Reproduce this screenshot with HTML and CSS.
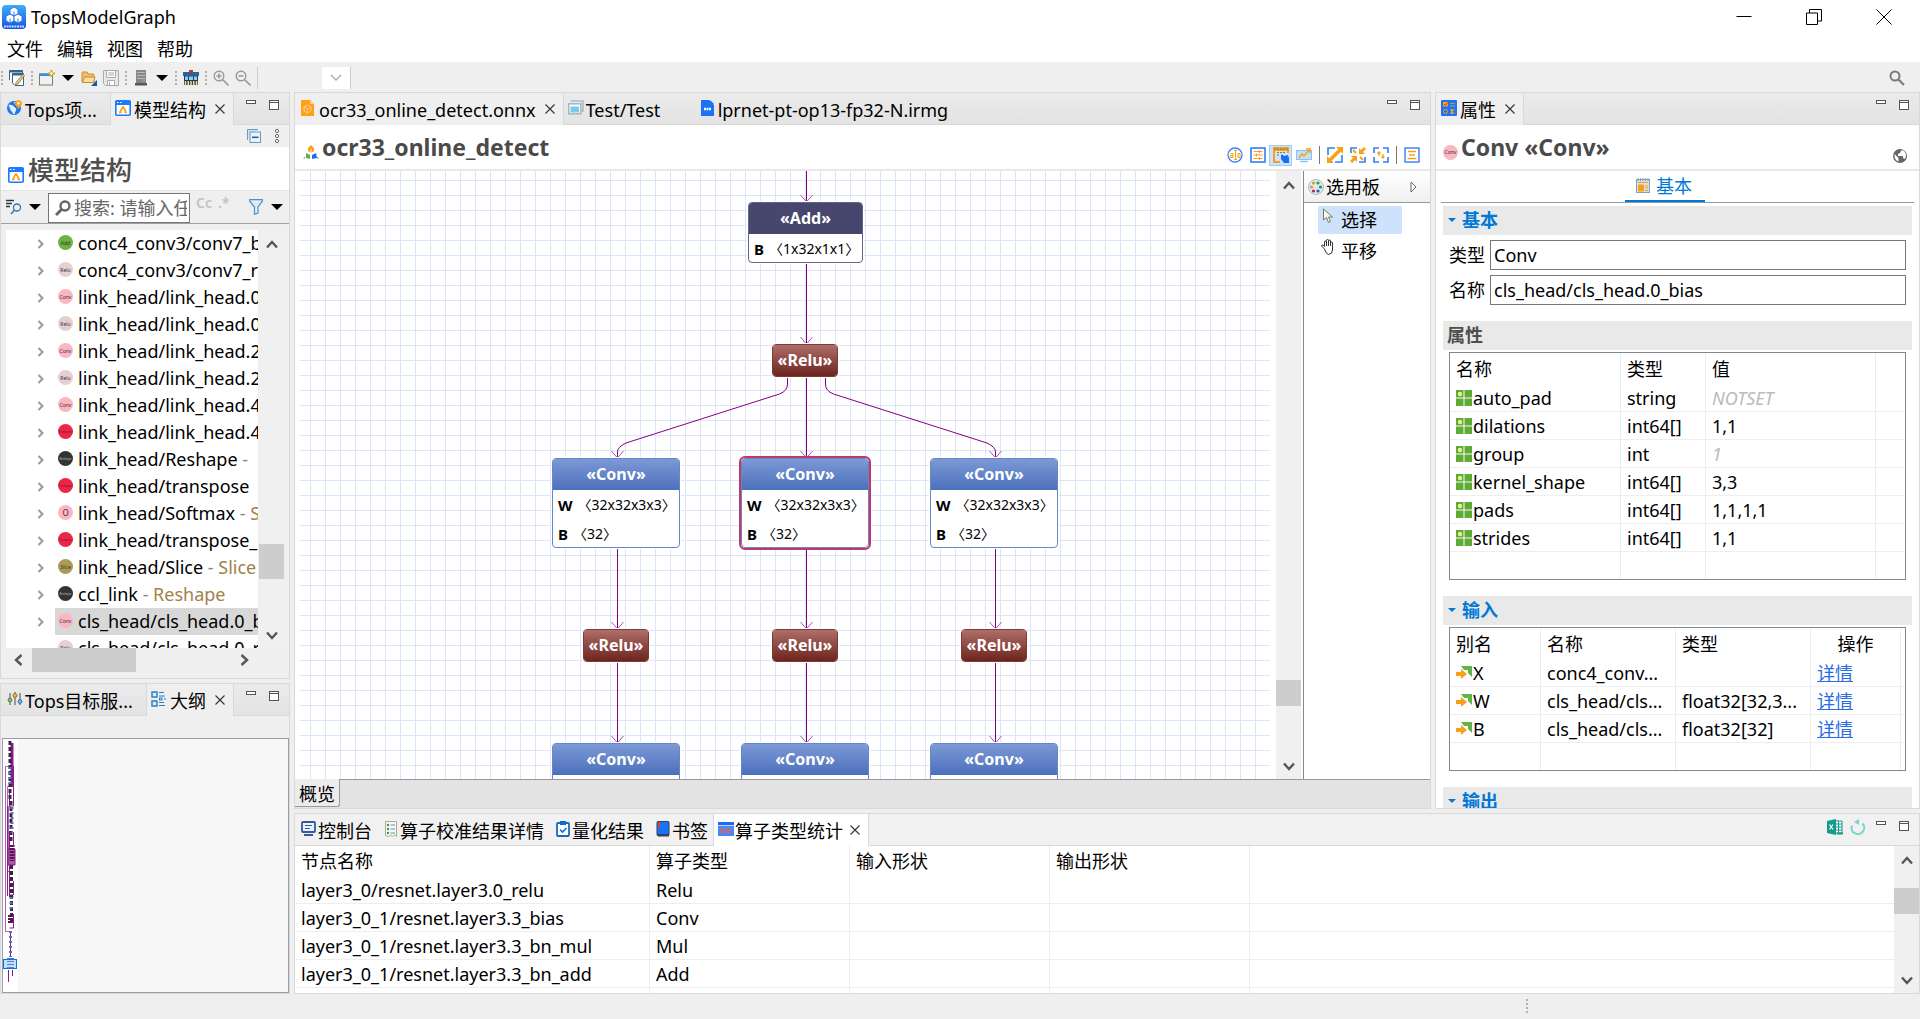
FILE: index.html
```html
<!DOCTYPE html>
<html lang="zh-CN">
<head>
<meta charset="utf-8">
<title>TopsModelGraph</title>
<link rel="stylesheet" href="styles.css">
</head>
<body>
<svg class="defs" aria-hidden="true">
  <defs>
    <linearGradient id="g-app" x1="0" y1="0" x2="0" y2="1"><stop offset="0" stop-color="#37b0fb"/><stop offset="1" stop-color="#1f50dc"/></linearGradient>
    <symbol id="close" viewBox="0 0 12 12"><path d="M1.500 1.500l9 9M10.500 1.500l-9 9" stroke="#333" stroke-width="1.100" fill="none"/></symbol>
    <symbol id="min" viewBox="0 0 16 16"><rect x="3.500" y="2.500" width="9" height="3" fill="#fff" stroke="#555"/></symbol>
    <symbol id="max" viewBox="0 0 16 16"><rect x="3.500" y="2.500" width="9" height="9" fill="#fff" stroke="#555"/><path d="M3 4.500h10" stroke="#555"/></symbol>
    <symbol id="caret" viewBox="0 0 12 8"><path d="M0 1h12L6 7z" fill="#000"/></symbol>
    <symbol id="twig" viewBox="0 0 8 10"><path d="M1.500 1l4 4-4 4" fill="none" stroke="#999" stroke-width="2"/></symbol>
    <symbol id="up" viewBox="0 0 12 12"><path d="M1 9.500l5-5.500 5 5.500" fill="none" stroke="#555" stroke-width="2.400"/></symbol>
    <symbol id="down" viewBox="0 0 12 12"><path d="M1 2.500L6 8l5-5.500" fill="none" stroke="#555" stroke-width="2.400"/></symbol>
    <symbol id="left" viewBox="0 0 12 12"><path d="M9.500 1L4 6l5.500 5" fill="none" stroke="#555" stroke-width="2.400"/></symbol>
    <symbol id="right" viewBox="0 0 12 12"><path d="M2.500 1L8 6l-5.500 5" fill="none" stroke="#555" stroke-width="2.400"/></symbol>
    <symbol id="attr" viewBox="0 0 16 16"><path d="M0 0h7.500v7.500H0zM8.500 0H16v7.500H8.500zM0 8.500h7.500V16H0zM8.500 8.500H16V16H8.500z" fill="#5fab35"/><circle cx="4" cy="4" r="2.200" fill="#eef08c"/></symbol>
    <symbol id="input" viewBox="0 0 16 16"><path d="M5 1h11v11l-4-4V5H8z" fill="#63b446"/><path d="M0 7h5V4l6 5-6 5v-3H0z" fill="#f7a11b"/></symbol>
    <symbol id="model" viewBox="0 0 16 16"><rect x=".8" y=".8" width="14.400" height="14.400" rx="1" fill="#fff" stroke="#1a7bff" stroke-width="1.600"/><path d="M0 1h16v4H0z" fill="#1a7bff"/><path d="M2 2.500h1.500M5 2.500h1.500" stroke="#fff"/><path d="M8 6.500L5 12M8 6.500l3 5.500M4 12.500h2.500M9.500 12.500H12" stroke="#f7a11b" stroke-width="1.600" fill="none"/></symbol>
  </defs>
</svg>

<div class="app">
  <header class="titlebar">
    <svg class="logo" viewBox="0 0 24 24"><rect width="24" height="24" rx="4" fill="url(#g-app)"/><g fill="#fff" stroke="#2a7cec" stroke-width="1"><path d="M12 2l4 2.200v4.600L12 11 8 8.800V4.200z"/><path d="M8 9l4 2.200v4.600L8 18l-4-2.200v-4.600z"/><path d="M16 9l4 2.200v4.600L16 18l-4-2.200v-4.600z"/></g><path d="M12 6.500v4M8 13.500V18M16 13.500V18" stroke="#2a7cec"/><path d="M2 21.500h20" stroke="#b9e4ff" stroke-width="2" stroke-dasharray="2 .6"/></svg>
    <span>TopsModelGraph</span>
    <div class="win-buttons">
      <button aria-label="最小化"><svg viewBox="0 0 16 16"><path d="M.5 7.500h15" stroke="#000"/></svg></button>
      <button aria-label="还原"><svg viewBox="0 0 16 16"><path d="M.5 4h11v11.500H.5zM3.500 4V.5h12v11.500h-4" fill="none" stroke="#000"/></svg></button>
      <button aria-label="关闭"><svg viewBox="0 0 16 16"><path d="M.5.5l15 15M15.500.5l-15 15" stroke="#000" fill="none"/></svg></button>
    </div>
  </header>

  <nav class="menubar"><button>文件</button><button>编辑</button><button>视图</button><button>帮助</button></nav>

  <div class="toolbar">
    <i class="grip"></i>
    <button aria-label="编辑窗口"><svg viewBox="0 0 16 16"><path d="M.5 10V.5h13V4" fill="#fff" stroke="#35648f"/><path d="M3.500 13V3.500h11v12H6z" fill="#fff" stroke="#35648f"/><path d="M0 1h14v1.500H0zM3 4h12v1.500H3z" fill="#35648f"/><path d="M7 12.500L14 4l1.500 1.500L9 14l-2.500.5z" fill="#eac57a" stroke="#7c6a3d" stroke-width=".7"/></svg></button>
    <i class="grip"></i>
    <button aria-label="新建"><svg viewBox="0 0 16 16"><rect x=".5" y="4" width="13" height="11" fill="#eaf4fd" stroke="#927a3f"/><path d="M0 3.500h11v2.500H0z" fill="#3f8fd2"/><path d="M12.500 0v7M9 3.500h7" stroke="#d6a536" stroke-width="2"/><path d="M12.500 2v3M11 3.500h3" stroke="#fff3b0"/></svg></button>
    <button aria-label="新建菜单" class="drop"><svg viewBox="0 0 12 8"><use href="#caret"/></svg></button>
    <button aria-label="打开"><svg viewBox="0 0 16 16"><path d="M1 12V3q0-1 1-1h4l1 2h5q1 0 1 1v7z" fill="#f2bd68" stroke="#c98a33"/><path d="M1.500 12.500L3.500 7H14l-1.500 5.500z" fill="#ffdc9c" stroke="#c98a33"/><path d="M16 10v6h-6z" fill="#0f58a8"/></svg></button>
    <button aria-label="保存"><svg viewBox="0 0 16 16"><path d="M.5.5h15v15H2.500l-2-2z" fill="#e8e8e8" stroke="#aaa"/><path d="M3.500.5h9v7h-9zM4.500 10.500h7v5h-7z" fill="#fff" stroke="#aaa"/><path d="M5 3h6M5 5h6M6.500 12v3" stroke="#aaa"/></svg></button>
    <i class="grip"></i>
    <button aria-label="设备"><svg viewBox="0 0 16 16"><path d="M3 0h10v13H3z" fill="#888"/><path d="M4 2.500h8M4 5.500h8M4 8.500h8" stroke="#bbb"/><path d="M2 13h12v2.500H2z" fill="#555"/><path d="M10 10.500h2" stroke="#4fd552" stroke-width="1.500"/></svg></button>
    <button aria-label="设备菜单" class="drop"><svg viewBox="0 0 12 8"><use href="#caret"/></svg></button>
    <i class="grip"></i>
    <button aria-label="模型库"><svg viewBox="0 0 16 16"><path d="M1 6h14v9H1z" fill="#24384f"/><path d="M0 2h16v4H0z" fill="#28639c"/><path d="M6 0h4v3H6z" fill="#c3303a"/><path d="M2 6.500h12v3.500H2z" fill="#8fd1f5"/><path d="M5.500 6.500V10M10.500 6.500V10" stroke="#24384f"/><path d="M2.500 11v5M5.300 11v5M8 11v5M10.700 11v5M13.500 11v5" stroke="#ffe0a0" stroke-width="1.500"/></svg></button>
    <i class="grip"></i>
    <button aria-label="放大"><svg viewBox="0 0 16 16"><circle cx="6" cy="6" r="4.800" fill="none" stroke="#999" stroke-width="1.400"/><path d="M3.500 6h5M6 3.500v5M9.500 9.500l6 6" stroke="#999" stroke-width="1.600"/></svg></button>
    <button aria-label="缩小"><svg viewBox="0 0 16 16"><circle cx="6" cy="6" r="4.800" fill="none" stroke="#999" stroke-width="1.400"/><path d="M3.500 6h5M9.500 9.500l6 6" stroke="#999" stroke-width="1.600"/></svg></button>
    <i class="rule"></i>
    <button class="zoom-combo" aria-label="缩放比例"><svg viewBox="0 0 12 8"><path d="M1 1l5 5 5-5" fill="none" stroke="#aaa" stroke-width="1.300"/></svg></button>
    <i class="rule"></i>
    <button class="search-all" aria-label="搜索"><svg viewBox="0 0 16 16"><circle cx="6" cy="6" r="4.500" fill="none" stroke="#7a7a7a" stroke-width="2"/><path d="M9.500 9.500l5.500 5.500" stroke="#7a7a7a" stroke-width="2.200"/></svg></button>
  </div>

  <div class="workspace">
    <div class="side">
      <section class="panel model-panel">
        <div class="tabs">
          <button class="tab t-proj"><svg class="ic" viewBox="0 0 16 16"><circle cx="7" cy="8" r="7" fill="#1f74f0"/><path d="M2 5l4 1 3 3-2 5-3-4zM7 2l3 4" fill="#dff0ff" stroke="#dff0ff"/><path d="M11.500 9L8.500 5a3.400 3.400 0 1 1 6 0z" fill="#f7a11b"/><circle cx="11.500" cy="3.300" r="1.200" fill="#fff"/></svg>Tops项...</button>
          <div class="tab active"><svg class="ic" viewBox="0 0 16 16"><use href="#model"/></svg>模型结构<button class="x" aria-label="关闭"><svg viewBox="0 0 12 12"><use href="#close"/></svg></button></div>
          <div class="view-buttons"><button aria-label="最小化"><svg class="ic" viewBox="0 0 16 16"><use href="#min"/></svg></button><button aria-label="最大化"><svg class="ic" viewBox="0 0 16 16"><use href="#max"/></svg></button></div>
        </div>
        <div class="view-tools">
          <button aria-label="全部折叠"><svg viewBox="0 0 14 14"><path d="M.5 11V.5H11" fill="#cfe3f5" stroke="#6f97bd"/><rect x="3" y="3" width="10.500" height="10.500" fill="#e6f2fc" stroke="#6f97bd"/><path d="M5 8.300h6.500" stroke="#1d5c96" stroke-width="1.500"/></svg></button>
          <button aria-label="视图菜单"><svg viewBox="0 0 14 14"><g fill="#fff" stroke="#666"><circle cx="7" cy="2" r="1.600"/><circle cx="7" cy="7" r="1.600"/><circle cx="7" cy="12" r="1.600"/></g></svg></button>
        </div>
        <h2 class="model-title"><svg class="ic" viewBox="0 0 16 16"><use href="#model"/></svg>模型结构</h2>
        <div class="filter">
          <button aria-label="搜索方式"><svg viewBox="0 0 16 16"><path d="M0 1.500h8M0 4.500h6M0 7.500h4" stroke="#333" stroke-width="1.500"/><circle cx="11" cy="8.500" r="3.500" fill="none" stroke="#2e76b5" stroke-width="1.300"/><path d="M8.500 11L5 15" stroke="#2e76b5" stroke-width="1.500"/></svg></button>
          <button class="drop" aria-label="搜索选项"><svg viewBox="0 0 12 8"><use href="#caret"/></svg></button>
          <label class="search"><svg viewBox="0 0 16 16"><circle cx="10" cy="6" r="4.500" fill="none" stroke="#666" stroke-width="2.400"/><path d="M6.500 9.500L1 15" stroke="#666" stroke-width="3"/></svg><input type="text" placeholder="搜索: 请输入任意文本" aria-label="搜索"></label>
          <button class="opt">Cc</button><button class="opt">.*</button>
          <button class="funnel" aria-label="过滤"><svg viewBox="0 0 14 16"><path d="M.7.7h12.600v1.500L9 8v6l-3.500 1.300V8L.7 2.200z" fill="#dcedfa" stroke="#5b8db8" stroke-width="1.200"/></svg></button>
          <button class="drop" aria-label="过滤选项"><svg viewBox="0 0 12 8"><use href="#caret"/></svg></button>
        </div>
        <div class="tree-wrap">
          <ul class="tree">
            <li><svg class="tw"><use href="#twig"/></svg><span class="op add">Add</span><span class="lb">conc4_conv3/conv7_bn_add</span></li>
            <li><svg class="tw"><use href="#twig"/></svg><span class="op relu">Relu</span><span class="lb">conc4_conv3/conv7_relu</span></li>
            <li><svg class="tw"><use href="#twig"/></svg><span class="op conv">Conv</span><span class="lb">link_head/link_head.0_bias</span></li>
            <li><svg class="tw"><use href="#twig"/></svg><span class="op relu">Relu</span><span class="lb">link_head/link_head.0_relu</span></li>
            <li><svg class="tw"><use href="#twig"/></svg><span class="op conv">Conv</span><span class="lb">link_head/link_head.2_bias</span></li>
            <li><svg class="tw"><use href="#twig"/></svg><span class="op relu">Relu</span><span class="lb">link_head/link_head.2_relu</span></li>
            <li><svg class="tw"><use href="#twig"/></svg><span class="op conv">Conv</span><span class="lb">link_head/link_head.4_bias</span></li>
            <li><svg class="tw"><use href="#twig"/></svg><span class="op trans">Transpose</span><span class="lb">link_head/link_head.4_trans</span></li>
            <li><svg class="tw"><use href="#twig"/></svg><span class="op reshape">Reshape</span><span class="lb">link_head/Reshape<em class="d"> -</em></span></li>
            <li><svg class="tw"><use href="#twig"/></svg><span class="op trans">Transpose</span><span class="lb">link_head/transpose</span></li>
            <li><svg class="tw"><use href="#twig"/></svg><span class="op soft">O</span><span class="lb">link_head/Softmax<em class="d"> - </em><em>Softmax</em></span></li>
            <li><svg class="tw"><use href="#twig"/></svg><span class="op trans">Transpose</span><span class="lb">link_head/transpose_1</span></li>
            <li><svg class="tw"><use href="#twig"/></svg><span class="op slice">Slice</span><span class="lb">link_head/Slice<em class="d"> - </em><em>Slice</em></span></li>
            <li><svg class="tw"><use href="#twig"/></svg><span class="op reshape">Reshape</span><span class="lb">ccl_link<em class="d"> - </em><em>Reshape</em></span></li>
            <li class="sel"><svg class="tw"><use href="#twig"/></svg><span class="op conv">Conv</span><span class="lb">cls_head/cls_head.0_bias</span></li>
            <li><svg class="tw"></svg><span class="op relu">Relu</span><span class="lb">cls_head/cls_head.0_relu</span></li>
          </ul>
          <div class="vbar"><svg viewBox="0 0 12 12"><use href="#up"/></svg><i class="thumb tree-v"></i><svg viewBox="0 0 12 12"><use href="#down"/></svg></div>
          <div class="hbar"><svg viewBox="0 0 12 12"><use href="#left"/></svg><i class="thumb"></i><svg viewBox="0 0 12 12"><use href="#right"/></svg></div>
        </div>
      </section>

      <section class="panel outline-panel">
        <div class="tabs">
          <button class="tab t-target"><svg class="ic" viewBox="0 0 16 16"><path d="M3 2v12M8 1v13M13 2v12" stroke="#666" stroke-width="1.200"/><circle cx="3" cy="9" r="1.900" fill="#8fc97a" stroke="#4a7f3a"/><circle cx="8" cy="4.500" r="1.900" fill="#eec04e" stroke="#8a6a1d"/><circle cx="13" cy="10.500" r="1.900" fill="#7fb7e6" stroke="#396e9c"/></svg>Tops目标服...</button>
          <div class="tab active"><svg class="ic" viewBox="0 0 16 16"><path d="M1 1h5v5H1zM1 10h5v5H1z" fill="#d9ecfa" stroke="#2d7cc0" stroke-width="1.400"/><path d="M8 1.500h5M8 5h6M13 8h2M8 11.500h5M8 14.500h6" stroke="#2d7cc0"/><rect x="8.500" y="7" width="2.500" height="2" fill="none" stroke="#2d7cc0"/></svg>大纲<button class="x" aria-label="关闭"><svg viewBox="0 0 12 12"><use href="#close"/></svg></button></div>
          <div class="view-buttons"><button aria-label="最小化"><svg class="ic" viewBox="0 0 16 16"><use href="#min"/></svg></button><button aria-label="最大化"><svg class="ic" viewBox="0 0 16 16"><use href="#max"/></svg></button></div>
        </div>
        <div class="outline">
          <svg viewBox="0 0 15 253">
            <g fill="none" stroke="#8b1a8b" stroke-width="1">
              <path d="M10 4v44" stroke-width="3"/><path d="M8 27.500H3.500v165H8M9 47.500H5.500v85H9M9 67.500H6.500v57H11" stroke="#b35fb8"/>
              <path d="M11.500 27v40M7.500 50v17h4M5.500 67v90M7.500 92v66h4M11.500 142v14h-4M11.500 175v14h-4M11.500 93v14"/><path d="M6 110h7v16H6z" fill="#a95aa9"/>
              <path d="M8.500 192v26M6.500 231v12M10.500 231v6"/>
            </g>
            <path d="M8 2v60M9 62v40M9.500 126v60" stroke="#3b2440" stroke-width="3" stroke-dasharray="4 2"/>
            <path d="M8 28v20M10 68v26M9 158v14M8.500 192v26" stroke="#5673b8" stroke-width="3" stroke-dasharray="2 3"/>
            <path d="M10 106v16M8.500 176v8" stroke="#5a164f" stroke-width="5" stroke-dasharray="2 1"/>
            <path d="M5 219.500h7M5 222.500h7M5 225.500h7M5 228.500h7" stroke="#5673b8"/>
            <rect x="1.500" y="220.500" width="13" height="9" fill="#4aa3ff" fill-opacity=".35" stroke="#0b76d8"/>
          </svg>
        </div>
      </section>
    </div>

    <div class="main">
      <div class="upper">
        <section class="panel editor">
          <div class="tabs">
            <div class="tab active"><svg class="ic" viewBox="0 0 16 16"><path d="M1 0h9l4 4v12H1z" fill="#ff9f1a"/><path d="M10 0v4h4z" fill="#ffd390"/><path d="M7.500 5l3.500 2v4l-3.500 2L4 11V7zM4 7l3.500 2L11 7M7.500 9v4" fill="none" stroke="#ffd390" stroke-width=".9"/></svg>ocr33_online_detect.onnx<button class="x" aria-label="关闭"><svg viewBox="0 0 12 12"><use href="#close"/></svg></button></div>
            <button class="tab t-test"><svg class="ic" viewBox="0 0 16 16"><path d="M3 1h12v10h-2" fill="none" stroke="#a9bccb" stroke-width="1.600"/><rect x=".8" y="3.800" width="12" height="10" fill="#fff" stroke="#a9b6c4" stroke-width="1.600"/><rect x="2.500" y="6.500" width="8.500" height="6" fill="#79c9e8"/></svg>Test/Test</button>
            <button class="tab"><svg class="ic" viewBox="0 0 16 16"><path d="M1 0h8l5 5v11H1z" fill="#1a73f5"/><path d="M10 0v4h4z" fill="#1a73f5"/><path d="M4 9h2M6.500 9h2M9 9h2" stroke="#fff" stroke-width="2.500"/></svg>lprnet-pt-op13-fp32-N.irmg</button>
            <div class="view-buttons"><button aria-label="最小化"><svg class="ic" viewBox="0 0 16 16"><use href="#min"/></svg></button><button aria-label="最大化"><svg class="ic" viewBox="0 0 16 16"><use href="#max"/></svg></button></div>
          </div>
          <header class="form-head">
            <h1><svg class="ic" viewBox="0 0 16 16"><path d="M8 1l3 3v3L8 9 5 7V4z" fill="#f7a11b"/><path d="M8 5v4" stroke="#fff"/><path d="M3 9l4 2v4l-4-1z" fill="#5fb04a"/><path d="M9 11l4-2 1 5-5 1z" fill="#1a6df5"/><path d="M0 14.500l2-2v2zM16 14.500l-2-2v2z" fill="#5fb04a"/></svg>ocr33_online_detect</h1>
            <div class="graph-tools">
              <button aria-label="属性显示"><svg class="ic" viewBox="0 0 16 16"><circle cx="8" cy="8" r="7" fill="#fff" stroke="#3288f7" stroke-width="1.300"/><path d="M8.500 3.500v9M7 3.500h3M7 12.500h3M3.500 6.500h2.500v4H3.500v-2H6M11 6.500h2v4h-2z" fill="none" stroke="#f7a11b"/></svg></button>
              <button aria-label="布局"><svg class="ic" viewBox="0 0 16 16"><rect x="1" y="1" width="14" height="14" fill="#fff" stroke="#2f80f7" stroke-width="1.600"/><path d="M3.500 4.500h9M3.500 8h9M3.500 11.500h9" stroke="#f7a11b"/><path d="M9.500 3v3M6.500 6.500v3M9.500 10v3" stroke="#f7a11b"/></svg></button>
              <button class="on" aria-label="手动选择"><svg class="ic" viewBox="0 0 16 16"><path d="M0 0h16v4H0z" fill="#f7a11b"/><path d="M1 0v15h6M15 1v5" fill="none" stroke="#f7a11b" stroke-width="2"/><path d="M1 2h14M4 5.500h8M4 8h3" stroke="#8a7c3c" stroke-dasharray="2 1"/><path d="M8 8q1-1 2 0l1 1 4-1 1 3v5h-5l-3-4z" fill="#1a6df5"/></svg></button>
              <button aria-label="监视"><svg class="ic" viewBox="0 0 16 16"><path d="M0 3h16v10H0z" fill="#8ec0f4"/><path d="M1 4h14v8H1z" fill="#c4defa"/><path d="M4 14.500h8" stroke="#8ec0f4" stroke-width="1.500"/><path d="M3 11l3-4 2 2 6-7M10 2h4v4" fill="none" stroke="#f7a11b" stroke-width="1.500"/></svg></button>
              <i></i>
              <button aria-label="展开"><svg class="ic" viewBox="0 0 16 16"><path d="M1 8V1h7M15 8v7H8" fill="none" stroke="#2f80f7" stroke-width="1.600"/><path d="M3 13L13 3" stroke="#f7a11b" stroke-width="3.500"/><path d="M0 9v7h7zM9 0h7v7z" fill="#f7a11b"/></svg></button>
              <button aria-label="收起"><svg class="ic" viewBox="0 0 16 16"><path d="M1 6V1h6M15 10v5h-6" fill="none" stroke="#2f80f7" stroke-width="1.600"/><path d="M9 1v6h6zM7 15V9H1z" fill="#f7a11b"/><path d="M15 1l-5 5M1 15l5-5" stroke="#f7a11b" stroke-width="3"/><path d="M3 3l3 3M10 10l3 3" stroke="#f7a11b" stroke-width="2"/></svg></button>
              <button aria-label="适应窗口"><svg class="ic" viewBox="0 0 16 16"><path d="M1 6V1h5M10 1h5v5M15 10v5h-5M6 15H1v-5" fill="none" stroke="#2f80f7" stroke-width="1.600"/><path d="M6 9V5M4.500 6.500L6 5l1.500 1.500M10 7v4M8.500 9.500L10 11l1.500-1.500" stroke="#f7a11b" stroke-width="1.300" fill="none"/></svg></button>
              <i></i>
              <button aria-label="属性列表"><svg class="ic" viewBox="0 0 16 16"><rect x="1" y="1" width="14" height="14" fill="#fff" stroke="#2f80f7" stroke-width="1.400"/><path d="M4 4.500h8M5 8h6M3.500 11.500h9" stroke="#f7a11b" stroke-width="1.500"/></svg></button>
            </div>
          </header>
          <div class="canvas">
            <div class="stage">
              <svg class="edges" width="970" height="608" fill="none" stroke="#800080">
                <path d="M506.500 0v31M506.500 92v81M506.500 207v80M317.500 378v80M506.500 378v80M695.500 378v80M317.500 492v80M506.500 492v80M695.500 492v80"/>
                <path d="M487.500 207v6q0 7-8 10L326 272q-8.500 4-8.500 9v6M525.500 207v6q0 7 8 10L687 272q8.500 4 8.500 9v6"/>
                <path stroke="#ad58ad" d="M500.500 24l6 7 6-7M500.500 166l6 7 6-7M500.500 280l6 7 6-7M311.500 280l6 7 6-7M689.500 280l6 7 6-7M311.500 451l6 7 6-7M500.500 451l6 7 6-7M689.500 451l6 7 6-7M311.500 565l6 7 6-7M500.500 565l6 7 6-7M689.500 565l6 7 6-7"/>
              </svg>
              <div class="node add n1"><b>«Add»</b><p><strong>B</strong>〈1x32x1x1〉</p></div>
              <div class="node relu n2"><b>«Relu»</b></div>
              <div class="node conv n3"><b>«Conv»</b><p><strong>W</strong>〈32x32x3x3〉</p><p><strong>B</strong>〈32〉</p></div>
              <div class="node conv picked n4"><b>«Conv»</b><p><strong>W</strong>〈32x32x3x3〉</p><p><strong>B</strong>〈32〉</p></div>
              <div class="node conv n5"><b>«Conv»</b><p><strong>W</strong>〈32x32x3x3〉</p><p><strong>B</strong>〈32〉</p></div>
              <div class="node relu n6"><b>«Relu»</b></div>
              <div class="node relu n7"><b>«Relu»</b></div>
              <div class="node relu n8"><b>«Relu»</b></div>
              <div class="node conv n9"><b>«Conv»</b><p></p></div>
              <div class="node conv n10"><b>«Conv»</b><p></p></div>
              <div class="node conv n11"><b>«Conv»</b><p></p></div>
            </div>
            <div class="vbar"><svg viewBox="0 0 12 12"><use href="#up"/></svg><i class="thumb canvas-v"></i><svg viewBox="0 0 12 12"><use href="#down"/></svg></div>
            <aside class="palette">
              <div class="pal-head"><svg class="ic" viewBox="0 0 16 16"><circle cx="8" cy="8" r="7.500" fill="#dfe9f3" stroke="#a9bacb"/><circle cx="5.500" cy="4" r="1.600" fill="#e0a400"/><circle cx="10" cy="4" r="1.600" fill="#3f9a35"/><circle cx="3.500" cy="8" r="1.600" fill="#ef9a1c"/><circle cx="12.500" cy="8" r="1.600" fill="#2a9440"/><circle cx="5.500" cy="12" r="1.600" fill="#c8233a"/><circle cx="10" cy="12" r="1.600" fill="#245cc0"/></svg>选用板<svg class="flyout" viewBox="0 0 8 12"><path d="M1 1l5 5-5 5z" fill="#fff" stroke="#666"/></svg></div>
              <button class="tool on"><svg viewBox="0 0 16 16"><path d="M3.500 1v11l3-2.500 2 5 2-1-2-4.500h4z" fill="#fffbe0" stroke="#777"/></svg>选择</button>
              <button class="tool"><svg viewBox="0 0 16 16"><path d="M4.500 10L2 7.500Q1 6.500 2 6q1-.3 2.500 1.500V3q0-1 1-1t1 1V1.500q0-1 1-1t1 1V2q0-1 1-1t1 1v2q0-1 1-1t1 1v7q0 4-4 4.500Q6 15 4.500 10zM6.500 3v4M8.500 2v5M10.500 3v4" fill="#fff" stroke="#333"/></svg>平移</button>
            </aside>
          </div>
          <div class="page-tabs"><button>概览</button></div>
        </section>

        <section class="panel props">
          <div class="tabs">
            <div class="tab active"><svg class="ic" viewBox="0 0 16 16"><rect width="16" height="16" rx="1" fill="#1a73f5"/><path d="M2 2h5v4.500H2z" fill="#f7a11b"/><path d="M3 4l1.500 1.500L7 2.500" fill="none" stroke="#d93a2b"/><path d="M9 3.500h5M9 6h5M9 10h5M9 13h5" stroke="#b99a52"/><circle cx="4.500" cy="11.500" r="2" fill="none" stroke="#f7a11b"/><path d="M11 9v5" stroke="#f7a11b" stroke-width="2"/></svg>属性<button class="x" aria-label="关闭"><svg viewBox="0 0 12 12"><use href="#close"/></svg></button></div>
            <div class="view-buttons"><button aria-label="最小化"><svg class="ic" viewBox="0 0 16 16"><use href="#min"/></svg></button><button aria-label="最大化"><svg class="ic" viewBox="0 0 16 16"><use href="#max"/></svg></button></div>
          </div>
          <header class="form-head">
            <h1><span class="op conv">Conv</span>Conv «Conv»</h1>
            <button class="globe" aria-label="在线文档"><svg viewBox="0 0 16 16"><circle cx="8" cy="8" r="7" fill="#666"/><path d="M2.500 6l4 4v3.500Q2 12 2.500 6zM10 2q4 1 4 6l-1 3-2-1V8H6V6l2-1 1-2z" fill="#fff"/></svg></button>
          </header>
          <div class="subtabs"><button><svg viewBox="0 0 14 15"><rect x=".5" y="1.500" width="13" height="13" fill="#d5e2ee" stroke="#8aa0b5"/><path d="M2 0v3M4.500 0v3M7 0v3M9.500 0v3M12 0v3" stroke="#8aa0b5"/><path d="M2 4.500h10M2.500 7h5v6h-5z" fill="#f7a11b" stroke="#f7a11b"/><path d="M9 8h3M9 10h3M9 12.500h3" stroke="#f7a11b"/></svg>基本</button></div>
          <div class="form">
            <h3 class="open">基本</h3>
            <div class="fields">
              <label for="f-type">类型</label><input id="f-type" type="text" value="Conv">
              <label for="f-name">名称</label><input id="f-name" type="text" value="cls_head/cls_head.0_bias">
            </div>
            <h3>属性</h3>
            <div class="box">
              <table class="grid attrs">
                <colgroup><col class="a1"><col class="a2"><col class="a3"><col></colgroup>
                <thead><tr><th>名称</th><th>类型</th><th>值</th><th></th></tr></thead>
                <tbody>
                  <tr><td><svg class="ic" viewBox="0 0 16 16"><use href="#attr"/></svg>auto_pad</td><td>string</td><td class="dflt">NOTSET</td><td></td></tr>
                  <tr><td><svg class="ic" viewBox="0 0 16 16"><use href="#attr"/></svg>dilations</td><td>int64[]</td><td>1,1</td><td></td></tr>
                  <tr><td><svg class="ic" viewBox="0 0 16 16"><use href="#attr"/></svg>group</td><td>int</td><td class="dflt">1</td><td></td></tr>
                  <tr><td><svg class="ic" viewBox="0 0 16 16"><use href="#attr"/></svg>kernel_shape</td><td>int64[]</td><td>3,3</td><td></td></tr>
                  <tr><td><svg class="ic" viewBox="0 0 16 16"><use href="#attr"/></svg>pads</td><td>int64[]</td><td>1,1,1,1</td><td></td></tr>
                  <tr><td><svg class="ic" viewBox="0 0 16 16"><use href="#attr"/></svg>strides</td><td>int64[]</td><td>1,1</td><td></td></tr>
                  <tr class="blank"><td></td><td></td><td></td><td></td></tr>
                </tbody>
              </table>
            </div>
            <h3 class="open">输入</h3>
            <div class="box">
              <table class="grid inputs">
                <colgroup><col class="i1"><col class="i2"><col class="i2"><col class="i3"><col></colgroup>
                <thead><tr><th>别名</th><th>名称</th><th>类型</th><th class="mid">操作</th><th></th></tr></thead>
                <tbody>
                  <tr><td><svg class="ic" viewBox="0 0 16 16"><use href="#input"/></svg>X</td><td>conc4_conv...</td><td></td><td><a href="#x">详情</a></td><td></td></tr>
                  <tr><td><svg class="ic" viewBox="0 0 16 16"><use href="#input"/></svg>W</td><td>cls_head/cls...</td><td>float32[32,3...</td><td><a href="#w">详情</a></td><td></td></tr>
                  <tr><td><svg class="ic" viewBox="0 0 16 16"><use href="#input"/></svg>B</td><td>cls_head/cls...</td><td>float32[32]</td><td><a href="#b">详情</a></td><td></td></tr>
                  <tr class="blank"><td></td><td></td><td></td><td></td><td></td></tr>
                </tbody>
              </table>
            </div>
            <h3 class="open">输出</h3>
          </div>
        </section>
      </div>

      <section class="panel stats">
        <div class="tabs light">
          <button class="tab"><svg class="ic" viewBox="0 0 16 16"><rect x="1" y="1" width="13" height="10" rx="1" fill="#eaf2ff" stroke="#33599b" stroke-width="1.800"/><path d="M4 4.500h7M4 7.500h5" stroke="#33599b"/><path d="M3 14h9" stroke="#33599b" stroke-width="2"/></svg>控制台</button>
          <button class="tab"><svg class="ic" viewBox="0 0 16 16"><path d="M2.500.5h11v15l-2-1.500-2 1.500-2-1.500-2 1.500-3-1z" fill="#f3f8fb" stroke="#b1a982"/><circle cx="5" cy="4" r="1.200" fill="#3c9c50"/><circle cx="5" cy="8" r="1.200" fill="#3c9c50"/><circle cx="5" cy="12" r="1.200" fill="#3c9c50"/><path d="M7.500 4H12M7.500 8H12M7.500 12H12" stroke="#6a8fb5"/></svg>算子校准结果详情</button>
          <button class="tab"><svg class="ic" viewBox="0 0 16 16"><rect x="2" y="2" width="12" height="13" rx="1" fill="#fff" stroke="#1569c7" stroke-width="1.800"/><path d="M5 0h6v4H5z" fill="#1569c7"/><path d="M5 8.500l2.500 2.500L11.500 7" fill="none" stroke="#1569c7" stroke-width="1.600"/></svg>量化结果</button>
          <button class="tab"><svg class="ic" viewBox="0 0 16 16"><rect x="2" y=".5" width="12" height="14" rx="1" fill="#1a73f5" stroke="#31415e"/><path d="M5 1v7l-2-2V1z" fill="#d8442c"/><path d="M2 13h12v2.500H3z" fill="#31415e"/></svg>书签</button>
          <div class="tab active"><svg class="ic" viewBox="0 0 16 16"><path d="M0 1h16v14H0z" fill="#3f8cff"/><path d="M0 1h16v3H0z" fill="#1a6df5"/><path d="M0 4.500h16" stroke="#bcd8ff"/><path d="M2.500 7.500h3v4h-3zM5.500 9.500h3M8.500 7h5M8.500 12h5M10 9.500h4M8.500 7v5" fill="none" stroke="#ff5a46"/></svg>算子类型统计<button class="x" aria-label="关闭"><svg viewBox="0 0 12 12"><use href="#close"/></svg></button></div>
          <div class="view-buttons">
            <button aria-label="导出Excel"><svg class="ic" viewBox="0 0 16 16"><path d="M8 2h7v12H8z" fill="#fff" stroke="#139b8c"/><path d="M8 5h7M8 8h7M8 11h7M11.500 2v12" stroke="#139b8c"/><path d="M0 2l9-2v16l-9-2z" fill="#139b8c"/><path d="M2.500 5.500l3.500 5M6 5.500l-3.500 5" stroke="#fff" stroke-width="1.200"/><path d="M10 14.500h6" stroke="#139b8c" stroke-width="2"/></svg></button>
            <button aria-label="刷新"><svg class="ic" viewBox="0 0 16 16"><path d="M2 6.500A6.300 6.300 0 1 0 12.500 4.500" fill="none" stroke="#74d7c7" stroke-width="2"/><path d="M9 0v6L4 3z" fill="#74d7c7"/></svg></button>
            <button aria-label="最小化"><svg class="ic" viewBox="0 0 16 16"><use href="#min"/></svg></button><button aria-label="最大化"><svg class="ic" viewBox="0 0 16 16"><use href="#max"/></svg></button>
          </div>
        </div>
        <div class="stats-body">
          <table class="grid ops">
            <colgroup><col class="o1"><col class="o2"><col class="o2"><col class="o2"><col></colgroup>
            <thead><tr><th>节点名称</th><th>算子类型</th><th>输入形状</th><th>输出形状</th><th></th></tr></thead>
            <tbody>
              <tr><td>layer3_0/resnet.layer3.0_relu</td><td>Relu</td><td></td><td></td><td></td></tr>
              <tr><td>layer3_0_1/resnet.layer3.3_bias</td><td>Conv</td><td></td><td></td><td></td></tr>
              <tr><td>layer3_0_1/resnet.layer3.3_bn_mul</td><td>Mul</td><td></td><td></td><td></td></tr>
              <tr><td>layer3_0_1/resnet.layer3.3_bn_add</td><td>Add</td><td></td><td></td><td></td></tr>
              <tr class="blank"><td></td><td></td><td></td><td></td><td></td></tr>
            </tbody>
          </table>
          <div class="vbar"><svg viewBox="0 0 12 12"><use href="#up"/></svg><i class="thumb stats-v"></i><svg viewBox="0 0 12 12"><use href="#down"/></svg></div>
        </div>
      </section>
    </div>
  </div>
  <footer class="status"><i class="grip"></i></footer>
</div>
</body>
</html>
```
FILE: styles.css
```css
* { box-sizing: border-box; }
body { margin: 0; background: #efefef; color: #000; font: 18px/24px "Noto Sans", "Noto Sans CJK SC", sans-serif; }
button, input { font: inherit; color: inherit; }
button { display: flex; align-items: center; padding: 0; border: 0; background: none; white-space: nowrap; }
svg { display: block; flex: none; }
h1, h2, h3, p, ul { margin: 0; padding: 0; }
em { font-style: normal; color: #9f8148; }
em.d { color: #888; }
.defs { position: absolute; width: 0; height: 0; }
.ic { width: 16px; height: 16px; }

.app { display: flex; flex-direction: column; height: 100vh; overflow: hidden; }

.titlebar { display: flex; align-items: center; gap: 5px; height: 34px; padding-left: 2px; background: #fff; flex: none; }
.logo { width: 24px; height: 24px; }
.win-buttons { display: flex; margin-left: auto; padding-right: 1px; }
.win-buttons button { width: 70px; height: 32px; justify-content: center; }
.win-buttons svg { width: 16px; height: 16px; }

.menubar { display: flex; gap: 14px; height: 28px; padding: 1px 7px 0; background: #fff; flex: none; }

.toolbar { display: flex; align-items: center; gap: 6px; height: 30px; padding: 2px 15px 0 1px; flex: none; }
.toolbar button { width: 16px; height: 16px; }
.toolbar button svg { width: 16px; height: 16px; }
.toolbar .drop { width: 14px; height: 8px; justify-content: center; }
.toolbar button.drop svg { width: 12px; height: 8px; }
.grip { width: 2px; height: 14px; background: repeating-linear-gradient(#b5b0a5 0 2px, transparent 2px 4px); }
.toolbar .rule { width: 1px; height: 22px; background: #ccc; }
.toolbar .zoom-combo { width: 28px; height: 22px; margin: 0 -6px 0 58px; background: #fff; justify-content: center; }
.toolbar button.zoom-combo svg { width: 12px; height: 8px; }
.toolbar .search-all { margin-left: auto; }

.workspace { display: flex; gap: 4px; flex: 1; min-height: 0; }
.side { display: flex; flex-direction: column; gap: 4px; width: 290px; flex: none; }
.main { display: flex; flex-direction: column; gap: 4px; flex: 1; min-width: 0; }
.upper { display: flex; gap: 4px; flex: 1; min-height: 0; }
.panel { display: flex; flex-direction: column; border: 1px solid #d9d9d9; overflow: hidden; min-width: 0; }
.model-panel { flex: 1; min-height: 0; }
.outline-panel { height: 311px; }
.editor { flex: 1; background: #fff; }
.props { width: 485px; background: #fff; }
.stats { height: 181px; background: #fff; flex: none; }

.tabs { display: flex; height: 32px; background: linear-gradient(#ebebeb, #e3e3e3); border-bottom: 1px solid #d9d9d9; flex: none; }
.tabs.light { background: #f1f1f1; }
.tab { display: flex; align-items: center; gap: 2px; height: 32px; padding: 2px 5px 0 6px; white-space: nowrap; }
.tab .ic { margin-bottom: 4px; }
.tab.active { gap: 3px; padding: 2px 7px 0 4px; background: #efefef; border: solid #d9d9d9; border-width: 0 1px; }
.editor .tab.active, .props .tab.active { padding-left: 5px; border-left: 0; }
.light .tab { gap: 1px; }
.light .tab.active { background: #fff; }
.x { width: 12px; height: 12px; margin: 0 0 2px 5px; }
.x svg { width: 12px; height: 12px; }
.t-proj { width: 109px; }
.t-target { width: 145px; }
.tab.t-test { width: 130px; padding-left: 4px; }
.view-buttons { display: flex; gap: 7px; height: 26px; margin-left: auto; padding: 5px 7px 0 0; }
.view-buttons button { height: 16px; }

.view-tools { display: flex; justify-content: flex-end; gap: 9px; height: 22px; padding-right: 5px; align-items: center; flex: none; }
.view-tools svg { width: 14px; height: 14px; }
.model-title { display: flex; align-items: flex-end; gap: 4px; height: 44px; padding: 0 0 4px 7px; background: #fff; border-bottom: 1px solid #e5e5e5; color: #4f4f4f; font-size: 26px; font-weight: 500; line-height: 32px; flex: none; }
.model-title .ic { margin-bottom: 3px; }
.filter { display: flex; align-items: center; gap: 7px; height: 33px; padding: 0 6px 0 5px; border-bottom: 1px solid #a0a0a0; flex: none; }
.filter svg { width: 16px; height: 16px; }
.filter .drop svg { width: 12px; height: 8px; }
.search { display: flex; align-items: center; gap: 3px; width: 142px; height: 30px; margin: 1px -1px 0 0; padding: 1px 2px 0 6px; border: 1px solid #767676; background: #fff; overflow: hidden; flex: none; }
.search input { flex: 1; min-width: 0; padding: 0; border: 0; outline: 0; background: none; }
.search input::placeholder { color: #666; opacity: 1; }
.opt { margin: 0 -1px 8px 0; color: #c0c4c8; font-weight: 600; font-size: 14px; line-height: 20px; }
.filter .funnel { margin-left: auto; }

.tree-wrap { display: grid; grid-template: minmax(0, 1fr) 24px / minmax(0, 1fr) 24px; flex: 1; min-height: 0; margin: 6px 6px 6px 5px; }
.tree { margin-right: 1px; background: #fff; overflow: hidden; list-style: none; }
.tree li { display: flex; align-items: center; height: 27px; padding-left: 31px; white-space: nowrap; }
.tw { width: 8px; height: 10px; margin-right: 10px; }
.op { display: grid; place-items: center; width: 15px; height: 15px; border-radius: 50%; font-size: 5px; line-height: 8px; font-weight: 400; overflow: hidden; flex: none; color: #333; }
.tree .op { margin: 0 3px 2px 3px; }
.lb { flex: 1; align-self: stretch; line-height: 27px; padding-left: 2px; overflow: hidden; }
.op.add { background: #6cb33f; }
.op.relu { background: #e5cfd3; }
.op.conv { background: #fbb6c2; }
.op.trans { background: #f02545; font-size: 3px; }
.op.reshape { background: #333; color: #bbb; font-size: 3px; }
.op.soft { background: #fbb6c2; font-size: 8px; }
.op.slice { background: #ac9b55; }
.tree .sel { background: linear-gradient(90deg, #fff 49px, #d8d8d8 49px); }

.vbar { display: flex; flex-direction: column; align-items: center; justify-content: space-between; width: 25px; padding: 8px 0 6px; background: #f0f0f0; flex: none; }
.vbar svg, .hbar svg { width: 12px; height: 12px; }
.thumb { background: #cdcdcd; }
.vbar .thumb { width: 25px; }
.tree-v { height: 35px; margin-top: 242px; }
.canvas-v { height: 26px; margin-top: 434px; }
.stats-v { height: 26px; margin-bottom: 39px; }
.hbar { display: flex; align-items: center; justify-content: space-between; padding: 0 8px 0 6px; }
.hbar .thumb { width: 104px; height: 24px; margin-right: 96px; }

.outline { flex: 1; margin: 22px 0 0 1px; border: 1px solid #9d9da6; background: linear-gradient(90deg, #fff 15px, #f7f7f7 15px); }
.outline svg { width: 15px; height: 253px; margin-left: -1px; }

.form-head { display: flex; justify-content: space-between; height: 46px; padding-left: 8px; border-bottom: 2px solid #e8e8e8; background: #fff; flex: none; }
.form-head h1 { display: flex; align-items: center; gap: 3px; height: 45px; padding-bottom: 1px; color: #4a4a4a; font-size: 23px; line-height: 32px; font-weight: 700; }
.form-head h1 > :first-child { margin-top: 10px; }
.props .form-head { padding-left: 7px; }
.graph-tools { display: flex; align-items: center; padding: 16px 7px 0 0; }
.graph-tools button { width: 23px; height: 21px; justify-content: center; }
.graph-tools .on { background: #cce4fb; outline: 1px solid #9ccdf8; outline-offset: -1px; }
.graph-tools i { width: 1px; height: 18px; margin: 0 3px 0 4px; background: #777; }
.globe { align-self: flex-end; margin: 0 11px 5px 0; }
.globe svg { width: 16px; height: 16px; }

.canvas { display: flex; flex: 1; min-height: 0; }
.stage { position: relative; flex: 1; margin: 0 6px 0 5px; overflow: hidden; background: linear-gradient(#dfe5f8 1px, transparent 1px) 0 9px / 15px 15px, linear-gradient(90deg, #dfe5f8 1px, transparent 1px) 10px 0 / 15px 15px; }
.edges { position: absolute; left: 0; top: 0; }
.node { position: absolute; border: 1px solid #6587c8; border-radius: 4px; background: #fff; box-shadow: 0 0 0 1px #fff; overflow: hidden; font-size: 14px; line-height: 28px; }
.node b { display: block; height: 31px; color: #fff; font-size: 16px; line-height: 31px; text-align: center; }
.node p { display: flex; height: 29px; padding: 1px 0 0 5px; white-space: nowrap; }
.node strong { margin-right: 5px; font-size: 15px; }
.node.add { width: 115px; height: 61px; border-color: #63638b; }
.node.add b { background: #46466e; }
.node.conv { width: 128px; height: 90px; }
.node.conv b { background: linear-gradient(#7d99d6, #4b70bb); }
.node.relu { width: 66px; height: 33px; border-color: #7e3a35; }
.node.relu b { background: linear-gradient(#ae6e69, #6d241e); }
.node.picked { outline: 2px solid #c03a68; }
.n1 { left: 448px; top: 31px; }
.n2 { left: 472px; top: 173px; }
.n3 { left: 252px; top: 287px; }
.n4 { left: 441px; top: 287px; }
.n5 { left: 630px; top: 287px; }
.n6 { left: 283px; top: 458px; }
.n7 { left: 472px; top: 458px; }
.n8 { left: 661px; top: 458px; }
.n9 { left: 252px; top: 572px; }
.n10 { left: 441px; top: 572px; }
.n11 { left: 630px; top: 572px; }

.palette { width: 127px; margin-left: 2px; border-left: 1px solid #888; flex: none; }
.pal-head { display: flex; align-items: center; gap: 2px; height: 32px; padding: 0 12px 0 4px; background: linear-gradient(#fff, #f0f0f0); border-bottom: 1px solid #999; }
.flyout { width: 8px; height: 12px; margin-left: auto; }
.tool { gap: 5px; width: 84px; height: 28px; margin: 3px 0 0 14px; padding-left: 2px; border-radius: 2px; }
.tool svg { width: 16px; height: 16px; margin: -9px 0 0 0; }
.tool.on { background: #cfe2fb; }
.page-tabs { display: flex; height: 29px; background: #e3e3e3; border-top: 1px solid #999; flex: none; }
.page-tabs button { width: 45px; height: 28px; margin-top: -1px; padding: 2px 0 0 4px; background: #ececec; border: solid #999; border-width: 0 1px 1px 0; border-radius: 0 0 3px 0; }

.subtabs { display: flex; justify-content: center; height: 32px; margin: 0 5px; border-bottom: 1px solid #999; flex: none; }
.subtabs button { gap: 6px; width: 80px; height: 31px; margin-right: 25px; padding-left: 11px; border-bottom: 2px solid #0078d7; color: #0078d7; }
.subtabs svg { width: 14px; height: 15px; }
.form { display: flex; flex-direction: column; flex: 1; min-height: 0; padding: 3px 7px 0; overflow: hidden; }
.form h3 { display: flex; align-items: center; gap: 6px; height: 29px; padding: 0 0 2px 4px; background: #e9e9e9; color: #4f4f4f; font-size: 18px; flex: none; }
.form h3.open { padding-left: 5px; color: #0078d7; }
.form h3.open::before { content: ""; border: solid transparent; border-width: 4px 4px 0; border-top-color: #0078d7; }
.fields { display: grid; grid-template-columns: auto 1fr; gap: 5px; align-items: center; padding: 5px 6px 16px; }
.fields input { height: 30px; padding: 0 3px; border: 1px solid #767676; outline: 0; background: #fff; }
.box { margin: 2px 6px 16px; border: 1px solid #828790; flex: none; }

.grid { width: 100%; border-collapse: separate; border-spacing: 0; table-layout: fixed; }
.grid th, .grid td { padding: 0 0 0 6px; text-align: left; font-weight: 400; white-space: nowrap; border-right: 1px solid #ebedf3; overflow: hidden; }
.grid th:last-child, .grid td:last-child { border-right: 0; }
.grid th { height: 31px; }
.grid td { height: 28px; border-bottom: 1px solid #eee; }
.grid .blank td { height: 27px; border-bottom: 0; }
.grid td .ic { display: inline-block; vertical-align: -1px; margin-right: 1px; }
.grid .mid { padding: 0; text-align: center; }
.grid a { color: #2a6be8; }
.dflt { color: #bbb; font-style: italic; }
.a1 { width: 171px; } .a2 { width: 85px; } .a3 { width: 170px; }
.i1 { width: 91px; } .i2 { width: 135px; } .i3 { width: 90px; }
.o1 { width: 355px; } .o2 { width: 200px; }
.stats-body { display: flex; align-items: flex-start; flex: 1; min-height: 0; overflow: hidden; }
.stats-body .grid { flex: 1; }
.stats-body .grid th { height: 30px; }
.stats-body .vbar { align-self: stretch; }

.status { display: flex; height: 25px; padding: 5px 0 0 79.5%; flex: none; }
```
